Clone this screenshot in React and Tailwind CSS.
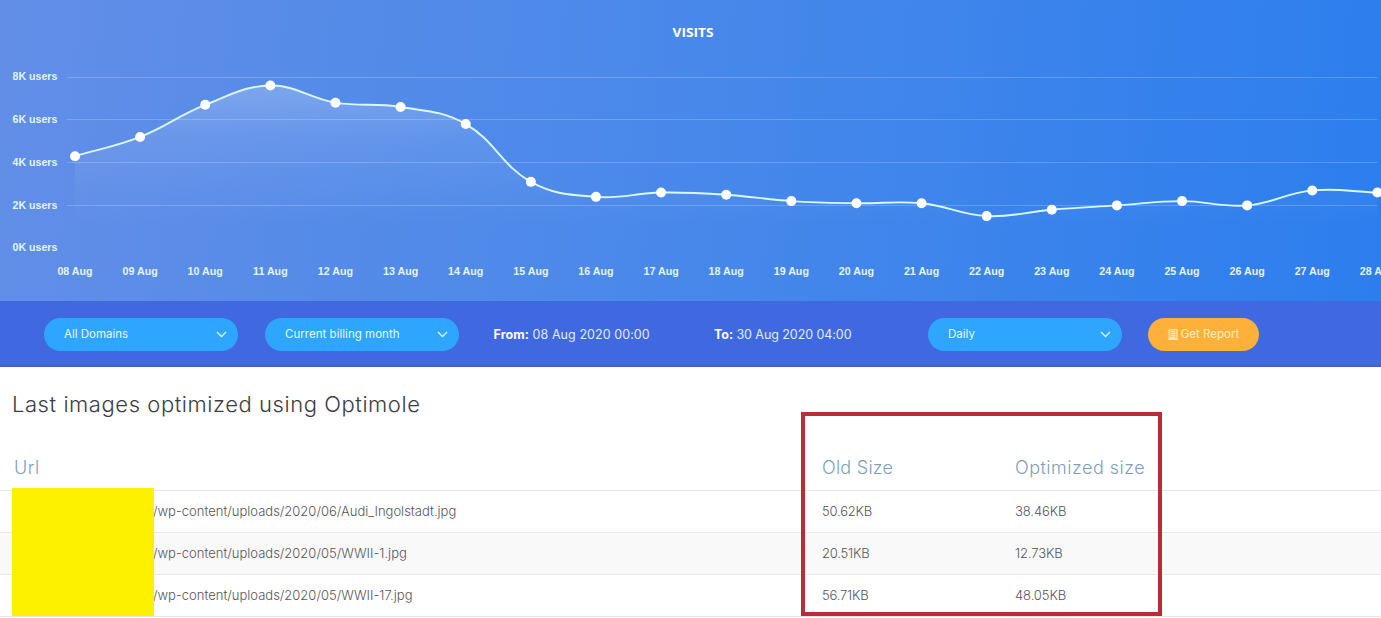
import React from 'react';

const visits = [
  { day: '08 Aug', users: 4.3 },
  { day: '09 Aug', users: 5.2 },
  { day: '10 Aug', users: 6.7 },
  { day: '11 Aug', users: 7.6 },
  { day: '12 Aug', users: 6.8 },
  { day: '13 Aug', users: 6.6 },
  { day: '14 Aug', users: 5.8 },
  { day: '15 Aug', users: 3.1 },
  { day: '16 Aug', users: 2.4 },
  { day: '17 Aug', users: 2.6 },
  { day: '18 Aug', users: 2.5 },
  { day: '19 Aug', users: 2.2 },
  { day: '20 Aug', users: 2.1 },
  { day: '21 Aug', users: 2.1 },
  { day: '22 Aug', users: 1.5 },
  { day: '23 Aug', users: 1.8 },
  { day: '24 Aug', users: 2.0 },
  { day: '25 Aug', users: 2.2 },
  { day: '26 Aug', users: 2.0 },
  { day: '27 Aug', users: 2.7 },
  { day: '28 Aug', users: 2.6 },
];

const images = [
  { url: '/wp-content/uploads/2020/06/Audi_Ingolstadt.jpg', oldSize: '50.62KB', newSize: '38.46KB' },
  { url: '/wp-content/uploads/2020/05/WWII-1.jpg', oldSize: '20.51KB', newSize: '12.73KB' },
  { url: '/wp-content/uploads/2020/05/WWII-17.jpg', oldSize: '56.71KB', newSize: '48.05KB' },
];

const TENSION = 0.4;
const toY = (users) => 248.2 - users * 21.4;
const points = visits.map((v, i) => ({ x: 75 + i * 65.12, y: toY(v.users) }));

// Bezier handles on both sides of a point, scaled by the distance to its neighbours
const handles = (i) => {
  const cur = points[i];
  const prev = points[i - 1] || cur;
  const next = points[i + 1] || cur;
  const before = Math.hypot(cur.x - prev.x, cur.y - prev.y);
  const after = Math.hypot(next.x - cur.x, next.y - cur.y);
  const a = (TENSION * before) / (before + after);
  const b = (TENSION * after) / (before + after);
  return {
    left: [cur.x - a * (next.x - prev.x), cur.y - a * (next.y - prev.y)],
    right: [cur.x + b * (next.x - prev.x), cur.y + b * (next.y - prev.y)],
  };
};

const linePath = points.reduce((path, p, i) => {
  if (i === 0) return `M${p.x},${p.y}`;
  return `${path} C${handles(i - 1).right} ${handles(i).left} ${p.x},${p.y}`;
}, '');

const VisitsChart = () => (
  <svg width="1381" height="301" viewBox="0 0 1381 301" className="block font-['Liberation_Sans',sans-serif]">
    <defs>
      <linearGradient id="area" gradientUnits="userSpaceOnUse" x1="0" y1="80" x2="0" y2="225">
        <stop offset="0" stopColor="#fff" stopOpacity="0.24" />
        <stop offset="0.4" stopColor="#fff" stopOpacity="0.09" />
        <stop offset="1" stopColor="#fff" stopOpacity="0" />
      </linearGradient>
    </defs>
    <text x="693" y="37" textAnchor="middle" textLength="41" lengthAdjust="spacingAndGlyphs" className="fill-white font-['Open_Sans',sans-serif] text-[12px] font-bold">VISITS</text>
    {[77.5, 119.5, 162.5, 205.5].map((y) => (
      <line key={y} x1="67" x2="1377" y1={y} y2={y} stroke="#fff" strokeOpacity="0.2" />
    ))}
    {[8, 6, 4, 2, 0].map((k) => (
      <text key={k} x="57.3" y={251.3 - k * 21.4} textAnchor="end" className="fill-[#e4f4ff] text-[10.6px] font-bold">{k}K users</text>
    ))}
    <path d={`${linePath} V248 H75 Z`} fill="url(#area)" />
    <path d={linePath} fill="none" stroke="#d9f8ff" strokeWidth="1.9" />
    {points.map((p, i) => (
      <g key={visits[i].day}>
        <circle cx={p.x} cy={p.y} r="5" fill="#fff" />
        <text x={p.x} y="274.5" textAnchor="middle" className="fill-[#e4f4ff] text-[10.7px] font-bold">{visits[i].day}</text>
      </g>
    ))}
  </svg>
);

const Dropdown = ({ label, className }) => (
  <button className={`flex h-[33px] w-[194px] shrink-0 items-center justify-between rounded-full bg-[#2ea6ff] pl-5 pr-[11px] text-[11.5px] text-[#e9f8ff] ${className}`}>
    <span className="pt-[2px]">{label}</span>
    <svg width="11" height="7" viewBox="0 0 11 7" fill="none" stroke="#d9f6ff" strokeWidth="1.4">
      <path d="M1 1l4.5 4.5L10 1" />
    </svg>
  </button>
);

const FilterBar = () => (
  <div className="flex h-[66px] items-center border-b-2 border-[#425fce] bg-[#4068e1] pl-11 pt-[2px]">
    <Dropdown label="All Domains" className="mr-[27px]" />
    <Dropdown label="Current billing month" className="tracking-[0.03px]" />
    <p className="ml-[34.5px] w-[220.5px] whitespace-nowrap pt-[3px] text-[12.5px] tracking-[0.07px] text-[#e1ecff]"><b className="text-white">From:</b> 08 Aug 2020 00:00</p>
    <p className="w-[214px] whitespace-nowrap pt-[3px] text-[12.5px] tracking-[-0.07px] text-[#e1ecff]"><b className="text-white">To:</b> 30 Aug 2020 04:00</p>
    <Dropdown label="Daily" className="mr-[26px]" />
    <button className="flex h-[33px] w-[111px] items-center justify-center gap-[3px] rounded-full bg-[#fdb03a] text-[11.5px] text-[#fff0c4]">
      <svg width="10" height="11" viewBox="0 0 10 11" fill="#fff" fillOpacity="0.3" stroke="#ffe9b5" strokeWidth="1">
        <path d="M1 .5h8v9h-8zM0 10.5h10M3 2.5h4M3 4.5h4M3 6.5h4M3 8.5h4" />
      </svg>
      <span className="pt-[2px]">Get Report</span>
    </button>
  </div>
);

const App = () => (
  <div className="h-[618px] w-[1381px] overflow-hidden bg-white font-['Inter',sans-serif]">
    <div className="h-[301px] bg-linear-[95deg,#628ee7,#4888ea_50%,#2c7eee]">
      <VisitsChart />
    </div>
    <FilterBar />

    <div className="relative">
      <h2 className="ml-3 h-[79px] pt-[21px] text-[22px] font-light leading-8 tracking-[0.56px] text-[#3c3c44]">Last images optimized using Optimole</h2>
      <div className="grid h-[45px] grid-cols-[808px_193px_1fr] border-b border-[#e4e6e8] pl-[14px] pt-[8px] text-[18px] font-light leading-7 text-[#7d9fbd]">
        <span className="tracking-[0.5px]">Url</span>
        <span className="tracking-[0.25px]">Old Size</span>
        <span className="tracking-[0.5px]">Optimized size</span>
      </div>
      {images.map((image) => (
        <div key={image.url} className="grid h-[42px] grid-cols-[669px_193px_1fr] items-center border-b border-[#e8e9eb] pl-[153px] text-[13px] font-light text-[#55555d] even:bg-[#f9f9fa]">
          <span>{image.url}</span>
          <span className="tracking-[-0.2px]">{image.oldSize}</span>
          <span className="tracking-[-0.1px]">{image.newSize}</span>
        </div>
      ))}

      {/* Hidden domain names */}
      <div className="absolute left-3 top-[121px] h-32 w-[142px] bg-[#fdf100]" />
      {/* Size columns highlight */}
      <div className="absolute left-[801px] top-[45px] h-[204px] w-[361px] border-4 border-[#b92d37]" />
    </div>
  </div>
);

export default App;
